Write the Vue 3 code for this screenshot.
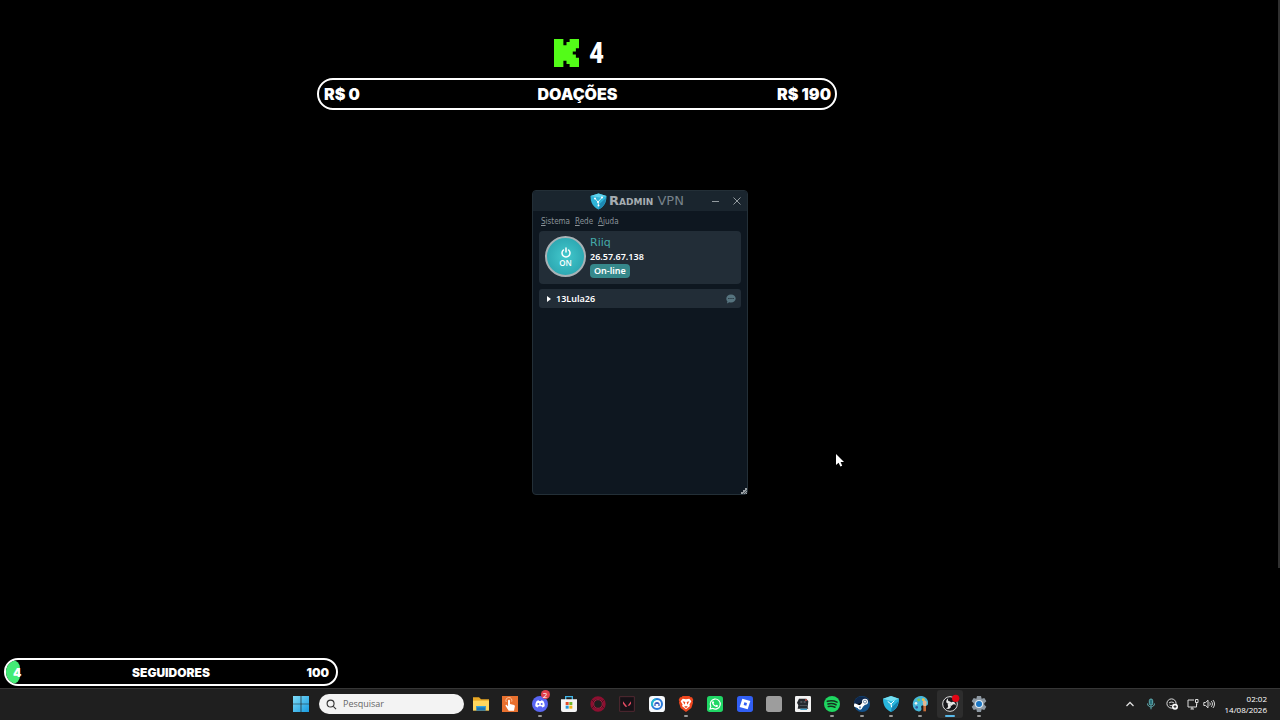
<template>
  <div class="screen">
    <main class="desktop">
      <section class="donations" aria-label="Doações">
        <div class="kick">
          <svg class="kick-logo" viewBox="1.333 0 21.334 24" preserveAspectRatio="none" aria-hidden="true">
            <path fill="#53fc18" d="M1.333 0h8v5.333H12V2.667h2.667V0h8v8H20v2.667h-2.667v2.666H20V16h2.667v8h-8v-2.667H12v-2.666H9.333V24h-8Z" />
          </svg>
          <span class="kick-count">4</span>
        </div>
        <div class="goal">
          <span>R$ 0</span>
          <span class="goal-title">DOAÇÕES</span>
          <span class="goal-end">R$ 190</span>
        </div>
      </section>

      <section class="vpn" aria-label="Radmin VPN">
        <header class="titlebar">
          <div class="brand">
            <svg class="shield" viewBox="0 0 34 34" aria-hidden="true">
              <path fill="#2fb4d8" d="M17 1 33 6c0 13-5 22-16 27C6 28 1 19 1 6Z" />
              <path fill="#5fd3ec" d="M17 1 33 6c-3 1-9 2-14 3L1 6Z" />
              <path fill="#1d89b3" d="M19 22 32 10c-1 11-6 18-15 23Z" />
              <path fill="none" stroke="#fff" stroke-width="1.500" d="M10 11l6 7 1 6M24 9l-8 9" />
              <g fill="#fff"><circle cx="10" cy="11" r="2" /><circle cx="24" cy="9" r="2" /><circle cx="17" cy="25" r="2" /><circle cx="16" cy="18" r="2" /></g>
            </svg>
            <span class="brand-name"><b>Radmin</b> VPN</span>
          </div>
          <div class="controls">
            <button type="button" aria-label="Minimizar">
              <svg viewBox="0 0 8 8"><path d="M0 4.500h7" /></svg>
            </button>
            <button type="button" aria-label="Fechar">
              <svg viewBox="0 0 8 8"><path d="M0.5 0.5l7 7M7.5 0.5l-7 7" /></svg>
            </button>
          </div>
        </header>

        <nav class="menu">
          <button v-for="item in menu" :key="item" type="button"><u>{{ item[0] }}</u>{{ item.slice(1) }}</button>
        </nav>

        <div class="status">
          <button class="power" type="button">
            <svg viewBox="0 0 12 12" aria-hidden="true">
              <path fill="none" stroke="#fff" stroke-width="1.5" stroke-linecap="round" d="M3.4 3a4 4 0 1 0 5.2 0M6 1v4" />
            </svg>
            <span>ON</span>
          </button>
          <div class="identity">
            <span class="host">Riiq</span>
            <span class="ip">26.57.67.138</span>
            <span class="badge">On-line</span>
          </div>
        </div>

        <div class="network">
          <button class="expand" type="button">
            <svg class="caret" viewBox="0 0 4 6" aria-hidden="true"><path fill="#fff" d="M0 0l4 3-4 3Z" /></svg>
            13Lula26
          </button>
          <button class="chat" type="button" aria-label="Chat">
            <svg viewBox="0 0 10 10"><path fill="#56747f" d="M5 .5c2.800 0 4.700 1.800 4.700 4S7.800 8.500 5 8.500c-.7 0-1.200-.1-1.700-.3L1 9.600l.4-2.300C.6 6.500.3 5.600.3 4.500c0-2.200 1.900-4 4.700-4Z" /><path stroke="#1f2a34" stroke-width="1.200" stroke-dasharray="1.200 .9" d="M2.300 4.500h5.400" /></svg>
          </button>
        </div>

        <svg class="grip" viewBox="0 0 6 6" aria-hidden="true"><path fill="#9aa0a4" d="M4 0h2v6H0V4h2V2h2Z" /><path stroke="#3a434a" stroke-width=".8" d="M2 6l4-4M4 6l2-2" /></svg>
      </section>

      <section class="followers" aria-label="Seguidores">
        <div class="followers-fill" :style="{ width: followers / goal * 100 + '%' }"></div>
        <span>{{ followers }}</span>
        <span class="goal-title">SEGUIDORES</span>
        <span class="goal-end">{{ goal }}</span>
      </section>

      <div class="edge"></div>

      <svg class="cursor" viewBox="0 0 8 13" aria-hidden="true">
        <path fill="#fff" d="M0 0v11l2.600-2.300L4.400 12.500l1.800-.8L4.600 8H8Z" />
      </svg>
    </main>

    <footer class="taskbar">
      <div class="center">
        <button class="app" type="button" aria-label="Iniciar">
          <svg viewBox="0 0 18 18">
            <defs><linearGradient id="win" x1="0" y1="0" x2="1" y2="1"><stop offset="0" stop-color="#7fdcf8" /><stop offset="1" stop-color="#189be0" /></linearGradient></defs>
            <path fill="url(#win)" d="M0 0h8.600v8.600H0ZM9.400 0H18v8.600H9.400ZM0 9.400h8.600V18H0ZM9.400 9.400H18V18H9.400Z" />
          </svg>
        </button>
        <label class="search">
          <svg viewBox="0 0 12 12" aria-hidden="true"><circle cx="5" cy="5" r="3.800" /><path d="M8 8l3 3" /></svg>
          <input type="search" placeholder="Pesquisar" aria-label="Pesquisar">
        </label>
        <div class="apps">
          <button
            v-for="app in apps"
            :key="app.name"
            class="app"
            :class="{ running: app.running, active: app.active }"
            type="button"
            :aria-label="app.name"
          >
            <svg viewBox="0 0 24 24" v-html="app.icon"></svg>
            <span v-if="app.count" class="count">{{ app.count }}</span>
          </button>
        </div>
      </div>

      <div class="tray">
        <button type="button" aria-label="Ícones ocultos"><svg viewBox="0 0 12 12"><path d="M2.500 8 6 4.500 9.500 8" stroke-width="1.300" /></svg></button>
        <button class="mic" type="button" aria-label="Microfone"><svg viewBox="0 0 12 12"><rect x="4.300" y="1" width="3.400" height="6.200" rx="1.700" fill="#2b6f78" /><path d="M2.500 5.500c0 4.500 7 4.500 7 0M6 9v2.300" /></svg></button>
        <button type="button" aria-label="Discord"><svg viewBox="0 0 12 12"><circle cx="5.500" cy="5.500" r="4.600" /><path d="M3 5.200c.6-1.500 4.400-1.500 5 0M3.500 7c1 .8 2 .8 3 0" /><circle cx="9" cy="8.700" r="3" fill="#fff" stroke="none" /><path d="M9 7.200v3M7.500 8.700h3" stroke="#202020" /></svg></button>
        <button type="button" aria-label="Rede e som" class="wide">
          <svg viewBox="0 0 12 12"><path d="M7 2H1v7h8.500V6M3.500 11H7M5 9v2M8.500 1.500h2.500v3H8.500ZM9.700 4.500V7" /></svg>
          <svg viewBox="0 0 12 12"><path d="M.8 4.500h1.800L5 2.200v7.600L2.600 7.500H.8ZM6.700 4.500c.7.900.7 2.100 0 3M8.300 3.200c1.500 1.600 1.500 4 0 5.600M9.900 2c2.100 2.400 2.100 5.600 0 8" /></svg>
        </button>
        <time class="clock" datetime="2026-08-14T02:02">02:02<br>14/08/2026</time>
      </div>
    </footer>
  </div>
</template>

<script setup>
import { ref } from 'vue'

const followers = ref(4)
const goal = ref(100)

const menu = ['Sistema', 'Rede', 'Ajuda']

// Icons are drawn on a 24x24 grid
const apps = [
  { name: 'Explorador de Arquivos', icon: '<path fill="#e9a825" d="M0 2h9l3 3h12v6H0Z"/><path fill="#ffd75e" d="M0 7h24v15H0Z"/><path fill="#1976b8" d="M5 15h14v7H5Z"/><path fill="#35a3dd" d="M5 15h14v2H5Z"/>' },
  { name: 'Clicker', icon: '<path fill="#e8702e" d="M0 0h24v24H0Z"/><path fill="#fff" d="M9 7c0-2 3-2 3 0v5l6 1.500c1 .3 1.500 1 1.300 2L18 22h-8l-4.500-7c-.8-1.300.7-2.300 1.800-1.300L9 15.500Z"/><path fill="none" stroke="#ffe2c9" d="M6.500 9a4.500 4.500 0 1 1 8-.5"/>' },
  { name: 'Discord', running: true, count: 2, icon: '<circle cx="12" cy="12" r="12" fill="#5865f2"/><path fill="#fff" d="M7 7.500c1-.6 2-.9 3-1l.6 1h2.800l.6-1c1 .1 2 .4 3 1 1.600 2.500 2.300 5 2 8-1.200.9-2.400 1.400-3.700 1.600l-1-1.700H9.700l-1 1.700C7.400 16.900 6.200 16.400 5 15.500c-.3-3 .4-5.500 2-8Z"/><circle cx="9.500" cy="12" r="1.500" fill="#5865f2"/><circle cx="14.500" cy="12" r="1.500" fill="#5865f2"/>' },
  { name: 'Microsoft Store', icon: '<path fill="none" stroke="#43b7e8" stroke-width="2" d="M7 7V1h10v6"/><path fill="#f4f4f4" d="M0 5h24v16q0 3-3 3H3q-3 0-3-3Z"/><path fill="#e34b27" d="M7 9h4.500v4.500H7Z"/><path fill="#6fb62c" d="M12.500 9H17v4.500h-4.500Z"/><path fill="#2496d8" d="M7 14.500h4.500V19H7Z"/><path fill="#f2b418" d="M12.500 14.500H17V19h-4.500Z"/>' },
  { name: 'Opera GX', icon: '<circle cx="12" cy="12" r="9.500" fill="none" stroke="#8d0f30" stroke-width="4"/><circle cx="12" cy="12" r="6.500" fill="none" stroke="#c81d48" stroke-width="1.200"/><path fill="none" stroke="#390b19" stroke-width="1" d="M3 6l3 3M21 6l-3 3M3 18l3-3M21 18l-3-3"/>' },
  { name: 'Valorant', icon: '<path fill="#161116" stroke="#6e303c" stroke-width="1" d="M1 1h22v22H1Z"/><path fill="#e34b62" d="M6 8l6.500 8H9.500L6 11.500ZM18 8v3.500L15.500 14.500H13Z"/>' },
  { name: 'Launcher', icon: '<rect width="24" height="24" rx="5" fill="#f6f9fc"/><circle cx="12" cy="12" r="7.500" fill="none" stroke="#2678d9" stroke-width="3"/><path fill="none" stroke="#20bad2" stroke-width="3" d="M5 15a7.500 7.500 0 0 1 5-10"/><path fill="#355ac1" d="M8 15v-2a4 4 0 0 1 8 0v2h-2v-3h-4v3Z"/>' },
  { name: 'Brave', running: true, icon: '<path fill="#f0471e" d="M7 0h10l2 2 2 0 2 4-1 2 .5 2-2.500 8L12 24l-8-6L1.500 10 2 8 1 6l2-4h2Z"/><path fill="#fff" d="M12 5l5-1 3 4-3 5 1 2-6 5-6-5 1-2-3-5 3-4Z"/><path fill="#f0471e" d="M7 8l4 1-1 4ZM17 8l-4 1 1 4ZM9 16l3-1 3 1-3 2Z"/>' },
  { name: 'WhatsApp', icon: '<rect width="24" height="24" rx="4" fill="#20d765"/><path fill="none" stroke="#fff" stroke-width="1.700" d="M4.500 19.500l1.200-4A7.500 7.500 0 1 1 8.500 18.500Z"/><path fill="#fff" d="M9.300 7.500l1.500 2.500-1 1.400c.8 1.500 1.600 2.200 3 2.800l1.300-1.200 2.600 1.300c-.3 2-1.700 2.400-3 2.200-3.500-.7-6-3.500-6.300-6.200 0-1.400.8-2.500 1.900-2.800Z"/>' },
  { name: 'Roblox', icon: '<rect width="24" height="24" rx="4" fill="#315ff4"/><path fill="#fff" fill-rule="evenodd" d="M8 4l12 3.500L16 20 4 16.500ZM11 9.500l-1 4 4 1 1-4Z"/>' },
  { name: 'Aplicativo', icon: '<rect width="24" height="24" rx="4" fill="#9d9d9d"/>' },
  { name: 'Jogo', icon: '<rect width="24" height="24" rx="2" fill="#f3f3f3"/><path fill="#24282d" d="M6 4h11l3 4-1 9 1 2H4l1-5-2-4Z"/><path fill="#5c6167" d="M8 8h3v2H8ZM13 8h3v2h-3ZM7 14h11v1H7Z"/><path fill="#c44c45" d="M15 5h3v2h-3Z"/><path fill="#3b9bc6" d="M8 19h10v2H8Z"/>' },
  { name: 'Spotify', running: true, icon: '<circle cx="12" cy="12" r="12" fill="#1ed760"/><path fill="none" stroke="#15321f" stroke-linecap="round" stroke-width="2.400" d="M5 8c5-1.500 10-1 14.500 1.200M6 12c4.500-1.200 8.500-.7 12 1.200M6.500 15.800c3.700-.9 7-.5 10 1"/>' },
  { name: 'Steam', running: true, icon: '<circle cx="12" cy="12" r="12" fill="#13528b"/><path fill="#0e274b" d="M0 12a12 12 0 0 1 23-4L12 12Z"/><path stroke="#fff" stroke-width="5" d="M0 13l9 4 8-8"/><circle cx="16.500" cy="8.500" r="4.500" fill="#fff"/><circle cx="16.500" cy="8.500" r="2.300" fill="none" stroke="#244b76"/><circle cx="9" cy="17" r="3.500" fill="#fff"/><circle cx="9" cy="17" r="1.600" fill="#6590b4"/>' },
  { name: 'Radmin VPN', running: true, icon: '<path fill="#29b6dc" d="M12 0 24 4c0 10-4 16-12 20C4 20 0 14 0 4Z"/><path fill="#73dff1" d="M12 0 24 4 13 8 0 4Z"/><path fill="#1583b0" d="M13 17 23 8c-1 8-4 12-11 16Z"/><path fill="none" stroke="#fff" stroke-width="1.500" d="M7 8l5 4 1 5M17 7l-5 5"/>' },
  { name: 'Paint', running: true, icon: '<path fill="#45b7d9" d="M13 0c8 0 12 6 11 12-.5 3-4 3-6 2-3-1-5 1-4 4 1 4-2 6-5 5C-3 20-1 1 13 0Z"/><circle cx="6" cy="11" r="2" fill="#e7f1f0"/><circle cx="10" cy="6" r="2.200" fill="#75c65b"/><circle cx="17" cy="5.500" r="2.200" fill="#f0c142"/><circle cx="7" cy="17" r="2" fill="#315c9f"/><path fill="#c76c38" d="M17 15h4v8h-4Z"/><path fill="#e5b68e" d="M16 9q3-5 6 0l-1 6h-4Z"/>' },
  { name: 'OBS Studio', running: true, active: true, icon: '<circle cx="12" cy="12" r="11" fill="#17171a" stroke="#ddd" stroke-width="1.500"/><g fill="#e5e5e5"><path id="blade" d="M12 12C5.500 12.500 4.500 6.500 9.500 3.500 8 7 10 8 12 8.200 14 8.500 14.500 11 12 12Z"/><path transform="rotate(120 12 12)" d="M12 12C5.500 12.500 4.500 6.500 9.500 3.500 8 7 10 8 12 8.200 14 8.500 14.500 11 12 12Z"/><path transform="rotate(240 12 12)" d="M12 12C5.500 12.500 4.500 6.500 9.500 3.500 8 7 10 8 12 8.200 14 8.500 14.500 11 12 12Z"/></g><circle cx="20.500" cy="3.500" r="5.500" fill="#e30615"/>' },
  { name: 'Configurações', running: true, icon: '<path fill="#8e99a3" d="M9 0h6l1 4 4-1 3 5-3 3v2l3 3-3 5-4-1-1 4H9l-1-4-4 1-3-5 3-3v-2L1 8l3-5 4 1Z"/><circle cx="12" cy="12" r="6" fill="#e4edf3"/><circle cx="12" cy="12" r="4.500" fill="#1976c5"/>' }
]
</script>

<style>
body {
  margin: 0;
  background: #000;
}
</style>

<style scoped>
.screen {
  display: flex;
  flex-direction: column;
  min-height: 100vh;
  background: #000;
  font-family: "Open Sans", "Noto Sans", sans-serif;
  color: #fff;
}

button {
  padding: 0;
  border: 0;
  background: none;
  color: inherit;
  font: inherit;
}

svg {
  display: block;
}

.desktop {
  position: relative;
  flex: 1;
  overflow: hidden;
}

/* --- Stream overlays --- */
.donations {
  position: absolute;
  top: 38px;
  left: 317px;
  width: 520px;
}

.kick {
  display: flex;
  align-items: center;
  justify-content: center;
  gap: 10px;
  height: 30px;
  margin-bottom: 10px;
  padding-left: 4px;
}

.kick-logo {
  width: 25px;
  height: 28px;
}

.kick-count {
  font: 700 30px/30px "Liberation Sans Narrow", "Roboto Condensed", Roboto, sans-serif;
}

.goal,
.followers {
  display: grid;
  grid-template-columns: 1fr auto 1fr;
  align-items: center;
  box-sizing: border-box;
  border: 2px solid #fff;
  border-radius: 16px;
  font-family: Inter, sans-serif;
  font-weight: 900;
}

.goal {
  height: 32px;
  padding: 0 4px 0 5px;
  font-size: 16px;
}

.goal-end {
  text-align: right;
}

.followers {
  position: absolute;
  bottom: 2px;
  left: 4px;
  width: 334px;
  height: 28px;
  padding: 0 7px;
  overflow: hidden;
  font-size: 12px;
}

.followers span {
  position: relative;
}

.followers-fill {
  position: absolute;
  top: 0;
  bottom: 0;
  left: 0;
  min-width: 14px;
  border-radius: 0 8px 8px 0;
  background: #43ec76;
}

/* --- VPN window --- */
.vpn {
  position: absolute;
  top: 190px;
  left: calc(50% - 108px);
  box-sizing: border-box;
  width: 216px;
  min-height: 305px;
  border: 1px solid #232f37;
  border-radius: 4px;
  background: #0e1720;
}

.titlebar {
  display: grid;
  grid-template-columns: 1fr auto;
  align-items: center;
  height: 20px;
  border-radius: 3px 3px 0 0;
  background: #1a252e;
}

.brand {
  display: flex;
  align-items: center;
  gap: 2px;
  padding-left: 57px;
}

.shield {
  width: 17px;
  height: 17px;
}

.brand-name {
  color: #76818a;
  font: 13px/16px "DejaVu Sans", sans-serif;
  font-variant: small-caps;
  white-space: nowrap;
}

.brand-name b {
  color: #a6adb2;
}

.controls {
  display: flex;
  gap: 13px;
  padding-right: 6px;
}

.controls svg {
  width: 8px;
  height: 8px;
  stroke: #929a9f;
  stroke-width: 1;
}

.menu {
  display: flex;
  gap: 5px;
  padding: 5px 8px 3px;
  color: #8b949a;
  font: 8px/12px "DejaVu Sans Condensed", "DejaVu Sans", sans-serif;
}

.status {
  display: flex;
  gap: 4px;
  margin: 0 6px;
  padding: 5px 6px;
  border-radius: 4px;
  background: #222d37;
}

.power {
  display: flex;
  flex-direction: column;
  align-items: center;
  justify-content: center;
  box-sizing: border-box;
  width: 41px;
  height: 41px;
  margin-bottom: 2px;
  border: 2px solid #a8b2b6;
  border-radius: 50%;
  background: radial-gradient(#43c9cd, #259ca8);
  font-weight: 600;
  font-size: 8px;
  line-height: 8px;
}

.power svg {
  width: 12px;
  height: 12px;
}

.identity {
  display: flex;
  flex-direction: column;
  align-items: flex-start;
  font-family: "Noto Sans", sans-serif;
  font-weight: 600;
  font-size: 9px;
  line-height: 14px;
}

.host {
  color: #44aaa9;
  font: 11px/14px "DejaVu Sans", sans-serif;
}

.badge {
  padding: 0 4px;
  border-radius: 4px;
  background: #36888b;
}

.network {
  display: flex;
  align-items: center;
  justify-content: space-between;
  height: 19px;
  margin: 5px 6px 0;
  padding: 0 5px 0 8px;
  border-radius: 3px;
  background: #222d37;
}

.expand {
  display: flex;
  align-items: center;
  gap: 5px;
  font: 600 9px/14px "Noto Sans", sans-serif;
}

.caret {
  width: 4px;
  height: 6px;
}

.chat svg {
  width: 10px;
  height: 10px;
}

.grip {
  position: absolute;
  right: 0;
  bottom: 0;
  width: 6px;
  height: 6px;
}

.edge {
  position: absolute;
  top: 0;
  right: 0;
  width: 2px;
  height: 568px;
  background: #303030;
}

.cursor {
  position: absolute;
  top: 454px;
  left: 836px;
  width: 8px;
  height: 13px;
}

/* --- Taskbar --- */
.taskbar {
  display: grid;
  grid-template-columns: 1fr auto 1fr;
  align-items: center;
  box-sizing: border-box;
  height: 32px;
  padding-bottom: 1px;
  border-top: 1px solid #363636;
  background: #1f1f1f;
}

.center {
  grid-column: 2;
  display: flex;
  align-items: center;
}

.search {
  display: flex;
  align-items: center;
  gap: 6px;
  box-sizing: border-box;
  width: 145px;
  height: 20px;
  margin: 0 8px 0 9px;
  padding: 0 7px;
  border-radius: 10px;
  background: #f3f3f3;
}

.search svg {
  width: 11px;
  height: 11px;
  fill: none;
  stroke: #333;
  stroke-width: 1.2;
}

.search input {
  flex: 1;
  min-width: 0;
  padding: 0;
  border: 0;
  outline: 0;
  background: none;
  font: 9px/12px "Open Sans", sans-serif;
}

.search input::placeholder {
  color: #666;
}

.apps {
  display: flex;
  justify-content: space-between;
  width: 516px;
}

.app {
  position: relative;
  width: 18px;
  height: 28px;
}

.app svg {
  width: 16px;
  height: 16px;
  margin: 0 auto;
}

.running::after {
  content: "";
  position: absolute;
  bottom: 1px;
  left: 7px;
  width: 4px;
  height: 2px;
  border-radius: 1px;
  background: #999;
}

.active::before {
  content: "";
  position: absolute;
  inset: 0 -4px;
  border-radius: 3px;
  background: #2d2d2d;
}

.active svg {
  position: relative;
  overflow: visible;
}

.active::after {
  left: 4px;
  width: 10px;
  background: #58b9e9;
}

.count {
  position: absolute;
  top: 0;
  right: -1px;
  width: 9px;
  height: 9px;
  border-radius: 50%;
  background: #e2414c;
  font-size: 8px;
  line-height: 9px;
  text-align: center;
}

.tray {
  display: flex;
  align-items: center;
  justify-content: flex-end;
  gap: 9px;
  padding-right: 13px;
}

.tray svg {
  width: 12px;
  height: 12px;
  fill: none;
  stroke: #ddd;
}

.tray .mic svg {
  stroke: #62b1b6;
}

.wide {
  display: flex;
  gap: 4px;
}

.clock {
  margin-left: 1px;
  font-size: 8px;
  line-height: 11px;
  text-align: right;
}
</style>
